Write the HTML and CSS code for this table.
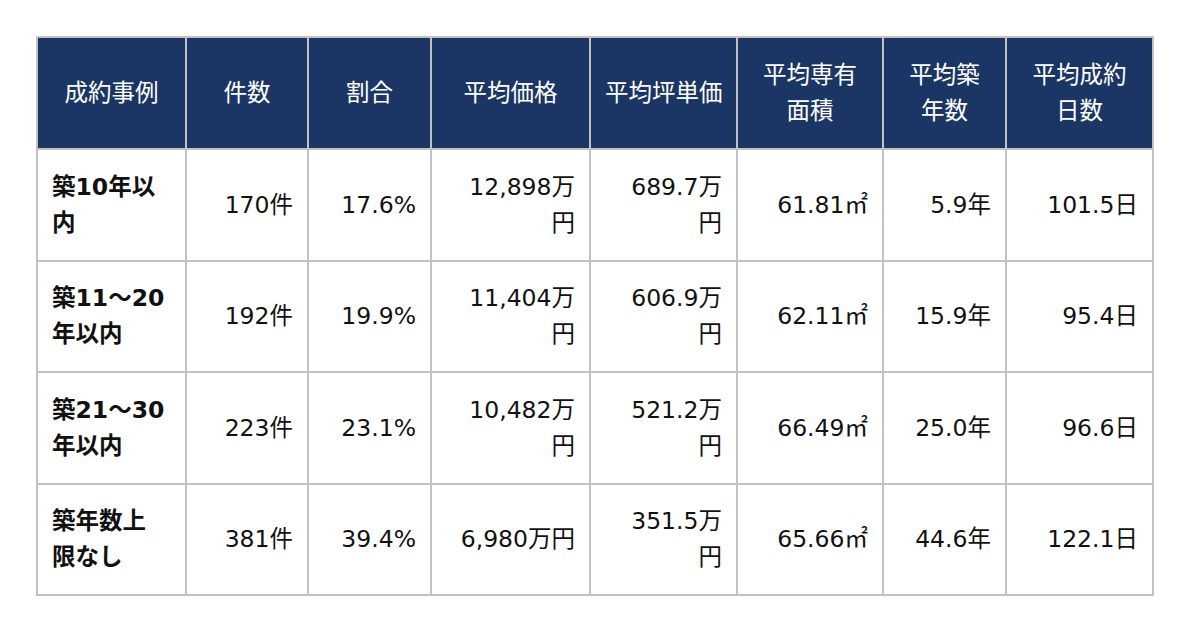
FILE: index.html
```html
<!DOCTYPE html>
<html lang="ja">
<head>
<meta charset="utf-8">
<link rel="stylesheet" href="styles.css">
</head>
<body>
<div class="wrap">
<table class="stats">
  <colgroup>
    <col class="c1"><col class="c2"><col class="c3"><col class="c4"><col class="c5"><col class="c6"><col class="c7"><col class="c8">
  </colgroup>
  <thead>
    <tr>
      <th>成約事例</th>
      <th>件数</th>
      <th>割合</th>
      <th>平均価格</th>
      <th>平均坪単価</th>
      <th>平均専有<br>面積</th>
      <th>平均築<br>年数</th>
      <th>平均成約<br>日数</th>
    </tr>
  </thead>
  <tbody>
    <tr>
      <td class="label">築10年以<br>内</td>
      <td>170件</td>
      <td>17.6%</td>
      <td>12,898万<br>円</td>
      <td>689.7万<br>円</td>
      <td>61.81㎡</td>
      <td>5.9年</td>
      <td>101.5日</td>
    </tr>
    <tr>
      <td class="label">築11〜20<br>年以内</td>
      <td>192件</td>
      <td>19.9%</td>
      <td>11,404万<br>円</td>
      <td>606.9万<br>円</td>
      <td>62.11㎡</td>
      <td>15.9年</td>
      <td>95.4日</td>
    </tr>
    <tr>
      <td class="label">築21〜30<br>年以内</td>
      <td>223件</td>
      <td>23.1%</td>
      <td>10,482万<br>円</td>
      <td>521.2万<br>円</td>
      <td>66.49㎡</td>
      <td>25.0年</td>
      <td>96.6日</td>
    </tr>
    <tr>
      <td class="label">築年数上<br>限なし</td>
      <td>381件</td>
      <td>39.4%</td>
      <td>6,980万円</td>
      <td>351.5万<br>円</td>
      <td>65.66㎡</td>
      <td>44.6年</td>
      <td>122.1日</td>
    </tr>
  </tbody>
</table>
</div>
</body>
</html>
```
FILE: styles.css
```css
html, body {
  margin: 0;
  padding: 0;
  background: #ffffff;
}
body {
  font-family: "DejaVu Sans", "Noto Sans CJK JP", "Noto Sans", sans-serif;
  color: #111111;
}
.wrap {
  padding: 36px 0 0 36px;
}
.stats {
  border-collapse: collapse;
  table-layout: fixed;
  width: 1118px;
  font-size: 23.5px;
  line-height: 36px;
}
.c1 { width: 149px; }
.c2 { width: 122px; }
.c3 { width: 123px; }
.c4 { width: 159px; }
.c5 { width: 147px; }
.c6 { width: 146px; }
.c7 { width: 123px; }
.c8 { width: 147px; }
.stats th,
.stats td {
  border: 2px solid #c2c2c2;
  padding: 0 14px;
  vertical-align: middle;
}
.stats thead tr {
  height: 112px;
}
.stats tbody tr {
  height: 111.5px;
}
.stats th {
  background: #1b3664;
  color: #ffffff;
  font-weight: 400;
  text-align: center;
  white-space: nowrap;
}
.stats td {
  text-align: right;
  white-space: nowrap;
}
.stats td.label {
  text-align: left;
  font-weight: 700;
}
```
